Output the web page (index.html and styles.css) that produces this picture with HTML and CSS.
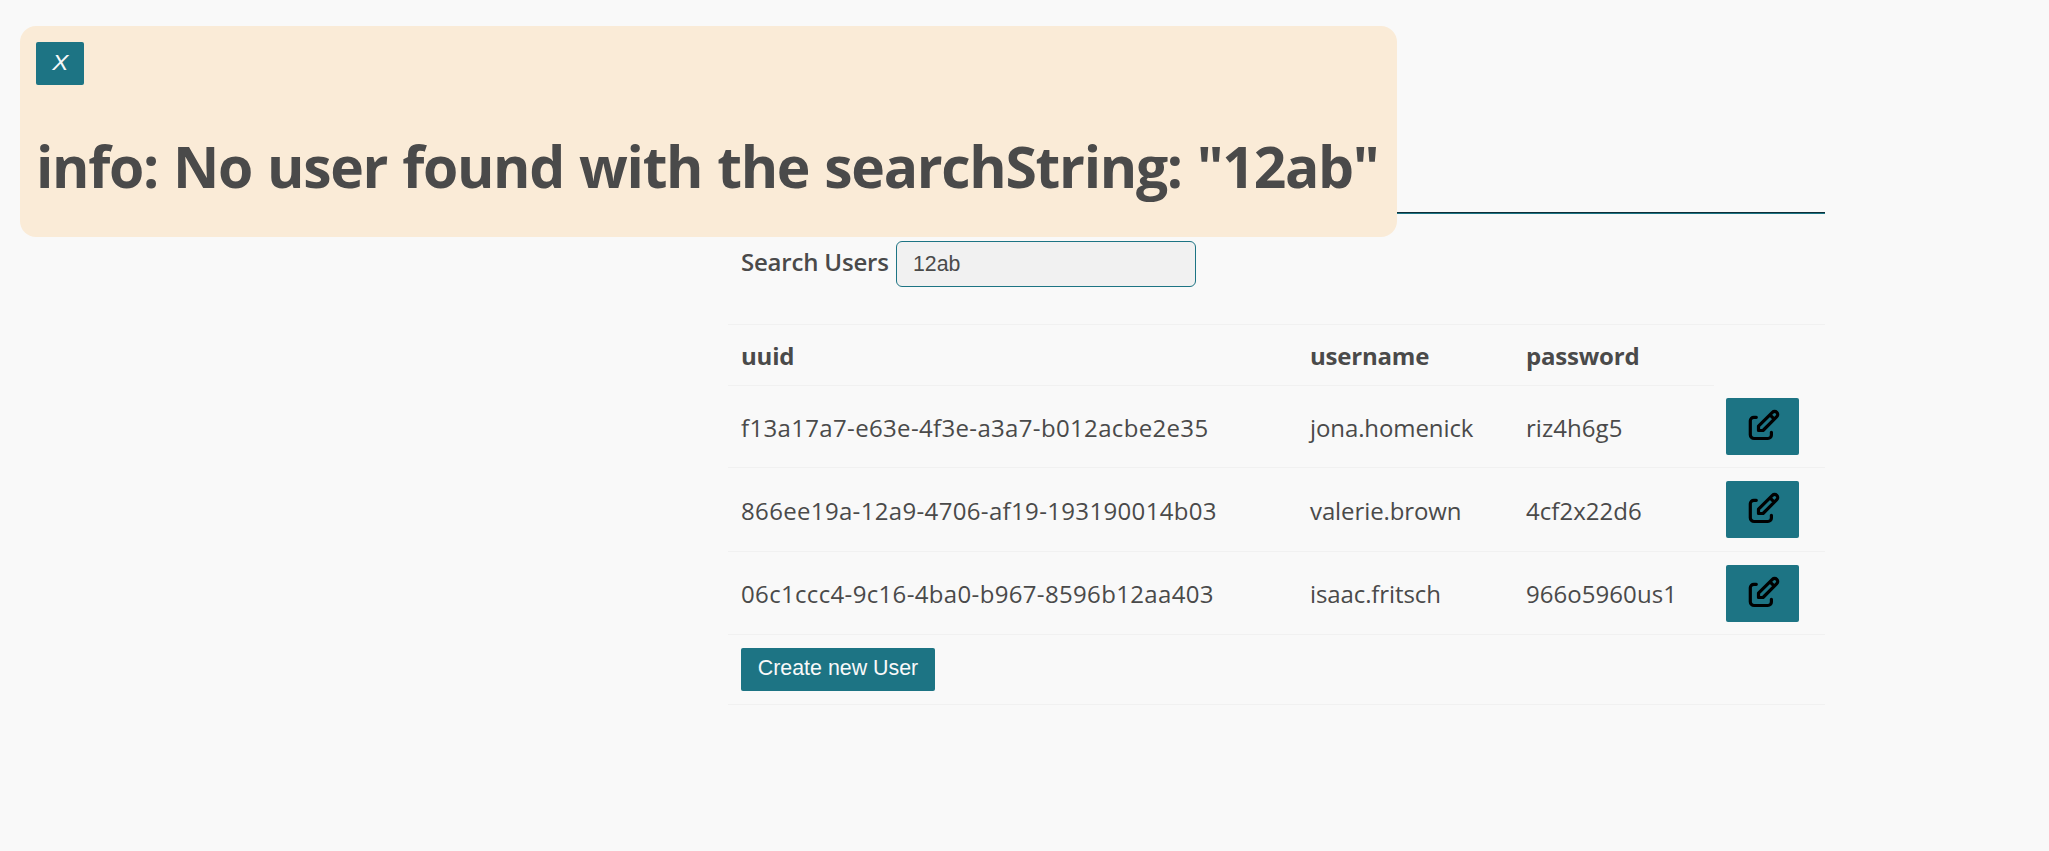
FILE: index.html
```html
<!DOCTYPE html>
<html lang="en">
<head>
<meta charset="utf-8">
<title>Users</title>
<link rel="stylesheet" href="styles.css">
</head>
<body>
<svg class="symbols" width="0" height="0" aria-hidden="true">
  <symbol id="edit" viewBox="0 0 32 32">
    <path d="M8.3 8.3H5.8A3.5 3.5 0 0 0 2.3 11.8V25.7A3.8 3.8 0 0 0 6.1 29.5H19.9A3.5 3.5 0 0 0 23.4 26V23.3"/>
    <path d="M10.5 21.5V17.2L24.4 3.3A3.1 3.1 0 0 1 28.8 7.7L15 21.5ZM22 5.8L26.3 10.1"/>
  </symbol>
</svg>
<aside class="popup">
  <button class="btn close"><i class="cross">X</i></button>
  <h1 class="message">info: No user found with the searchString: "12ab"</h1>
</aside>
<main class="content">
  <header class="banner"></header>
  <form class="search">
    <label class="label" for="q">Search Users</label>
    <input class="field" id="q" type="text" value="12ab">
  </form>
  <table class="users">
    <colgroup><col class="c-id"><col class="c-name"><col class="c-pass"><col></colgroup>
    <tr class="head"><th>uuid</th><th>username</th><th>password</th></tr>
    <tr class="r1"><td class="id">f13a17a7-e63e-4f3e-a3a7-b012acbe2e35</td><td class="name">jona.homenick</td><td class="pass">riz4h6g5</td><td class="action"><button class="btn edit"><svg class="icon"><use href="#edit"/></svg></button></td></tr>
    <tr class="r2"><td class="id">866ee19a-12a9-4706-af19-193190014b03</td><td class="name">valerie.brown</td><td class="pass">4cf2x22d6</td><td class="action"><button class="btn edit"><svg class="icon"><use href="#edit"/></svg></button></td></tr>
    <tr class="r3"><td class="id">06c1ccc4-9c16-4ba0-b967-8596b12aa403</td><td class="name">isaac.fritsch</td><td class="pass">966o5960us1</td><td class="action"><button class="btn edit"><svg class="icon"><use href="#edit"/></svg></button></td></tr>
    <tr class="foot"><td class="action-wide" colspan="4"><button class="btn create">Create new User</button></td></tr>
  </table>
</main>
</body>
</html>
```

FILE: styles.css
```css
* { box-sizing: border-box; }
body {
  margin: 0;
  background: #f9f9f9;
  color: #4a4a4a;
  font-family: "Open Sans", "Noto Sans", sans-serif;
  font-size: 24px;
}
.symbols { position: absolute; }
.btn {
  display: block;
  border: 0;
  border-radius: 2px;
  padding: 0;
  background: #1d7484;
  color: #f9f9f9;
  font: 21.4px/41px "Liberation Sans", sans-serif;
}
.popup {
  position: absolute;
  left: 20px;
  top: 26px;
  width: 1377px;
  height: 211px;
  padding: 16px;
  border-radius: 16px;
  background: #faebd7;
}
.close {
  width: 48px;
  height: 43px;
  padding: 0 0 2px 1px;
  font-size: 22px;
}
.cross { display: inline-block; transform: scaleX(1.1); }
.message {
  margin: 42px 0 0;
  font-size: 57px;
  line-height: 78px;
  font-weight: 700;
  letter-spacing: -1.3px;
  word-spacing: 1.5px;
  white-space: nowrap;
}
.content { width: 1097px; margin-left: 728px; }
.banner {
  height: 214px;
  border-bottom: 1px solid #1d7484;
  box-shadow: inset 0 -1px #0e2f38;
}
.search {
  display: flex;
  gap: 7px;
  height: 110px;
  padding: 27px 0 0 13px;
}
.label {
  width: 148px;
  line-height: 41px;
  font-weight: 600;
  letter-spacing: -0.2px;
  white-space: nowrap;
}
.field {
  width: 300px;
  height: 46px;
  padding: 0 16px;
  border: 1px solid #1d7484;
  border-radius: 6px;
  background: #f1f1f1;
  color: #4a4a4a;
  font: 21.3px "Liberation Sans", sans-serif;
}
.users {
  width: 100%;
  table-layout: fixed;
  border-spacing: 0;
  border-top: 1px solid #f1f1f1;
}
.c-id { width: 569px; }
.c-name { width: 216px; }
.c-pass { width: 201px; }
.users th, .users td {
  padding: 2px 0 0 13px;
  border-bottom: 1px solid #f1f1f1;
  text-align: left;
  vertical-align: middle;
  line-height: 34px;
  white-space: nowrap;
}
.users th { letter-spacing: -0.2px; }
.users .id { letter-spacing: 0.34px; }
.users .name { letter-spacing: -0.1px; }
.users .pass { letter-spacing: 0.05px; }
.users .action { padding: 0 0 0 12px; }
.users .action-wide { padding: 0 0 0 13px; }
.head { height: 61px; }
.r1 { height: 82px; }
.r2 { height: 84px; }
.r3 { height: 83px; }
.foot { height: 70px; }
.edit { width: 73px; height: 57px; padding-left: 2px; }
.icon {
  display: block;
  width: 32px;
  height: 32px;
  margin: -3px auto 0;
  fill: none;
  stroke: #000;
  stroke-width: 3.2;
  stroke-linecap: round;
  stroke-linejoin: round;
}
.create { width: 194px; height: 43px; padding-bottom: 2px; }
```
